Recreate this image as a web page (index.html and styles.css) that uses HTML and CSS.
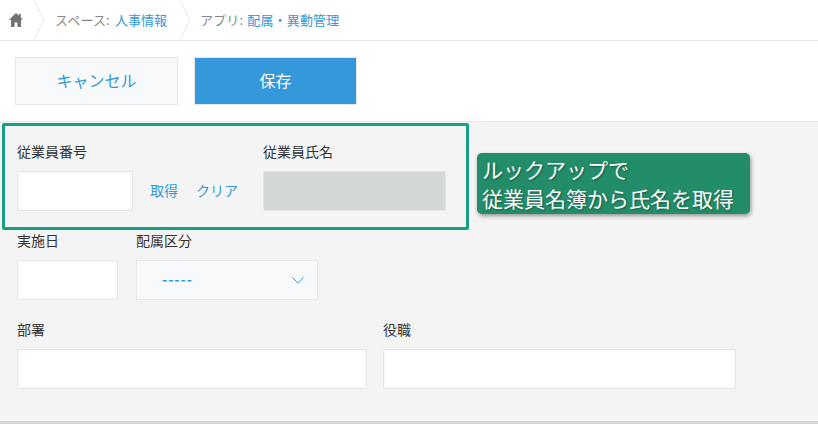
FILE: index.html
```html
<!DOCTYPE html>
<html lang="ja">
<head>
<meta charset="utf-8">
<title>配属・異動管理</title>
<link rel="stylesheet" href="styles.css">
</head>
<body>
<nav class="crumbs">
  <a class="crumb home" aria-label="ホーム">
    <svg class="home-icon" viewBox="0 0 14 14" width="14" height="14"><path d="M7 0 0 6.8h2V14h3.6V9.4h2.8V14H12V6.8h2L11.8 4.6V1h-2v1.7z" fill="#727272"/></svg>
  </a>
  <svg class="chev" viewBox="0 0 12 40" width="12" height="40"><path d="M.5 0 11 20 .5 40" fill="none" stroke="#e3e7e8"/></svg>
  <span class="crumb space">スペース: <a class="link">人事情報</a></span>
  <svg class="chev" viewBox="0 0 12 40" width="12" height="40"><path d="M.5 0 11 20 .5 40" fill="none" stroke="#e3e7e8"/></svg>
  <span class="crumb app">アプリ: <a class="link">配属・異動管理</a></span>
</nav>
<div class="toolbar">
  <button class="btn cancel">キャンセル</button>
  <button class="btn save">保存</button>
</div>
<main class="form">
  <div class="row">
    <div class="field"><label>従業員番号</label><div class="input w-num"></div></div>
    <div class="actions"><a class="link">取得</a><a class="link">クリア</a></div>
    <div class="field"><label>従業員氏名</label><div class="input disabled w-name"></div></div>
  </div>
  <div class="row">
    <div class="field"><label>実施日</label><div class="input w-date"></div></div>
    <div class="field"><label>配属区分</label>
      <div class="select">
        <span class="dashes">-----</span>
        <svg viewBox="0 0 12 7" width="12" height="7"><path d="M.5.5l5.5 5.8L11.5.5" fill="none" stroke="#3498db" stroke-width="1"/></svg>
      </div>
    </div>
  </div>
  <div class="row">
    <div class="field"><label>部署</label><div class="input w-dept"></div></div>
    <div class="field"><label>役職</label><div class="input w-post"></div></div>
  </div>
</main>
<div class="highlight"></div>
<div class="callout">ルックアップで<br>従業員名簿から氏名を取得</div>
</body>
</html>
```
FILE: styles.css
```css
* { box-sizing: border-box; }
html, body { height: 100%; }
body {
  margin: 0;
  display: flex;
  flex-direction: column;
  overflow: hidden;
  position: relative;
  background: #f4f4f4;
  color: #333;
  font-family: "Noto Sans CJK JP", "Noto Sans", sans-serif;
  font-size: 14px;
}
.link { color: #3498db; }
.crumbs {
  height: 41px;
  display: flex;
  align-items: center;
  background: #fff;
  border-bottom: 1px solid #e3e7e8;
  font-size: 13px;
  color: #888;
  white-space: nowrap;
}
.crumb.home { display: block; width: 33px; height: 40px; padding: 13px 0 0 9px; }
.home-icon { display: block; }
.chev { flex: none; display: block; }
.crumb { padding-bottom: 1px; }
.crumb.space { padding-left: 10px; width: 134px; letter-spacing: .15px; }
.crumb.space .link { margin-left: 2px; letter-spacing: 0; }
.crumb.app { padding-left: 9px; letter-spacing: .15px; }
.crumb.app .link { margin-left: 1px; }
.toolbar {
  height: 81px;
  padding: 16px 15px 0;
  display: flex;
  gap: 16px;
  background: #fff;
  border-bottom: 1px solid #e3e7e8;
}
.btn {
  width: 163px;
  height: 48px;
  padding: 0 0 2px;
  border: 1px solid #e3e7e8;
  font-family: inherit;
  font-size: 16px;
}
.cancel { background: #f7f9fa; color: #3498db; }
.save { background: #3498db; color: #fff; }
.form {
  flex: 1;
  padding: 20px 17px 0;
  display: flex;
  flex-direction: column;
  gap: 20px;
  border-bottom: 3px solid #d3d7d7;
}
.row { display: flex; gap: 16px; }
.row:first-child { gap: 0; }
.row:nth-child(2) { gap: 18px; }
.field { display: flex; flex-direction: column; }
.field label { height: 29px; line-height: 18px; color: #333; }
.input {
  height: 40px;
  background: #fff;
  border: 1px solid #e3e7e8;
  box-shadow: inset 0 0 3px #f1f1f1;
}
.disabled { background: #d3d7d7; box-shadow: none; }
.w-num { width: 116px; }
.w-name { width: 183px; }
.w-date { width: 101px; }
.w-dept { width: 350px; }
.w-post { width: 353px; }
.actions {
  display: flex;
  gap: 18px;
  align-items: center;
  width: 113px;
  margin-left: 17px;
  height: 40px;
  padding-bottom: 2px;
  align-self: flex-end;
  line-height: 20px;
}
.select {
  width: 182px;
  height: 40px;
  display: flex;
  align-items: center;
  justify-content: space-between;
  padding: 0 13px 2px 25px;
  background: #f7f9fa;
  border: 1px solid #e3e7e8;
  color: #3498db;
}
.select svg { margin-top: 2px; }
.dashes { letter-spacing: 1px; font-weight: 700; color: #2f9ae6; }
.highlight {
  position: absolute;
  left: 2px;
  top: 123px;
  width: 467px;
  height: 107px;
  border: 3px solid #18a085;
  border-radius: 2px;
}
.callout {
  position: absolute;
  left: 477px;
  top: 153px;
  width: 273px;
  height: 61px;
  padding: 2px 0 0 5px;
  background: #238c68;
  border-radius: 5px;
  box-shadow: 1px 2px 4px rgba(0,0,0,.4);
  color: #fff;
  font-size: 21px;
  line-height: 29px;
  text-shadow: 1px 1px 2px rgba(0,0,0,.35);
  white-space: nowrap;
}
```
